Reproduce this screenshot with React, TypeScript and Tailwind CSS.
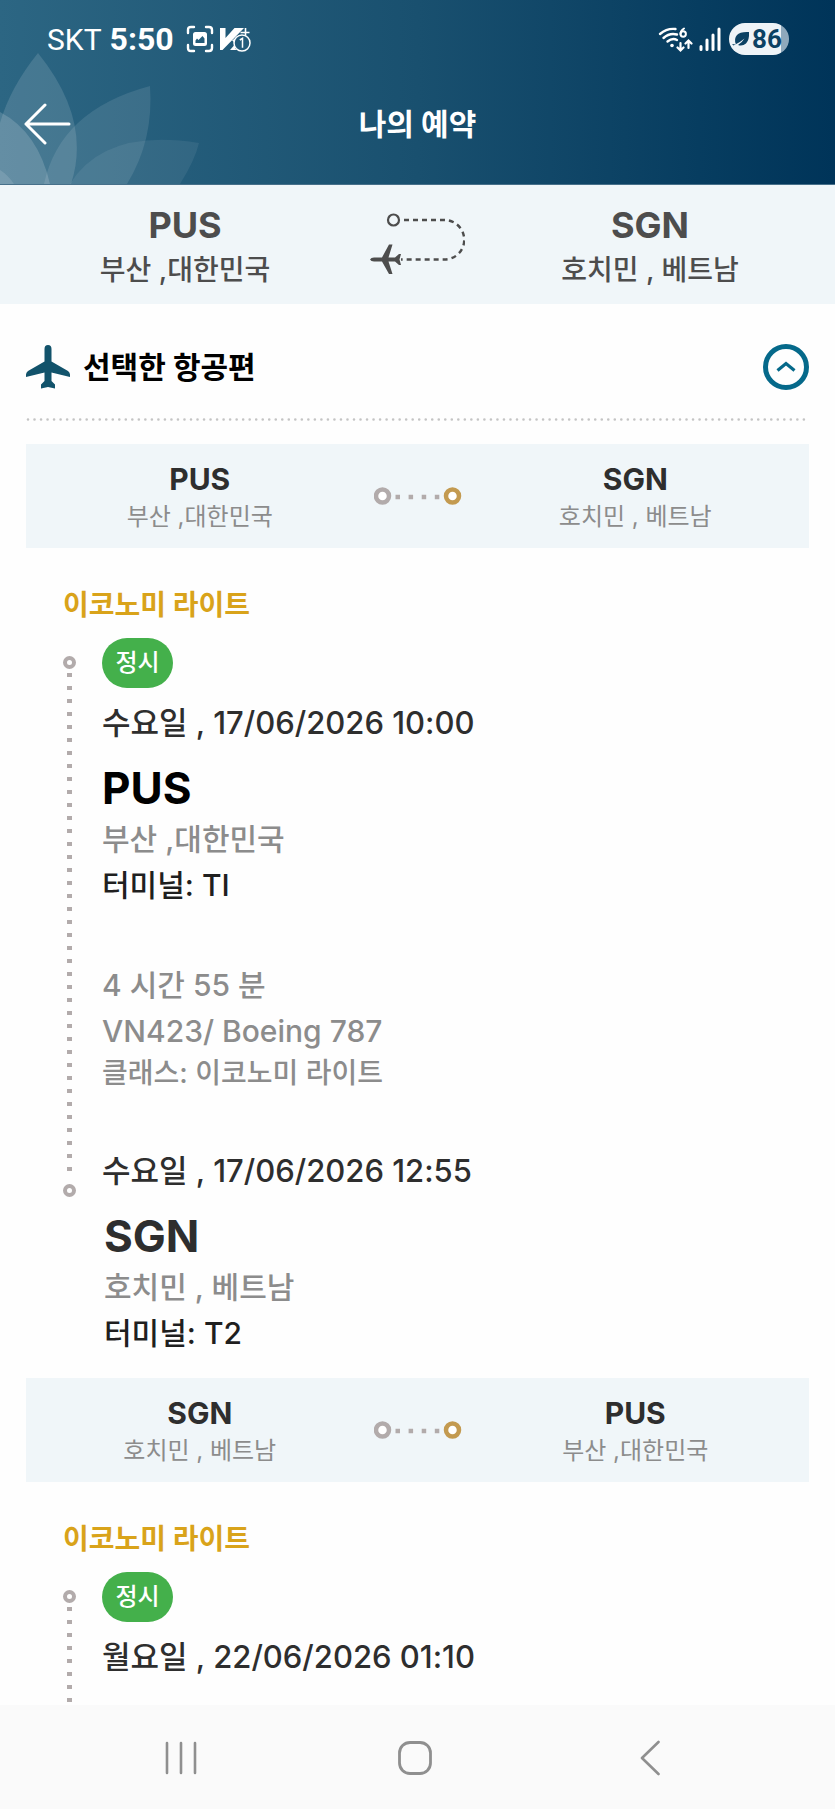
type Airport = { code: string; city: string }

type Leg = {
  from: Airport
  to: Airport
  cabin: string
  status: string
  departDate: string
}

const PUS: Airport = { code: 'PUS', city: '부산 ,대한민국' }
const SGN: Airport = { code: 'SGN', city: '호치민 , 베트남' }

const OUTBOUND: Leg = {
  from: PUS,
  to: SGN,
  cabin: '이코노미 라이트',
  status: '정시',
  departDate: '수요일 , 17/06/2026 10:00',
}

const INBOUND: Leg = {
  from: SGN,
  to: PUS,
  cabin: '이코노미 라이트',
  status: '정시',
  departDate: '월요일 , 22/06/2026 01:10',
}

function StatusBar() {
  return (
    <div className="flex items-center h-[46px] pl-[47px] pr-[46px] font-['Roboto',sans-serif] text-white">
      <span className="text-[30px]">SKT</span>
      <span className="ml-2 text-[32px] font-bold">5:50</span>

      {/* Notifications */}
      <svg className="ml-3 shrink-0" width="28" height="28" viewBox="0 0 28 28" fill="none" aria-hidden="true">
        <path
          d="M2 8V5q0-3 3-3h3M20 2h3q3 0 3 3v3M26 20v3q0 3-3 3h-3M8 26H5q-3 0-3-3v-3"
          stroke="currentColor"
          strokeWidth="2.4"
          strokeLinecap="round"
        />
        <path
          fillRule="evenodd"
          d="M9.500 7h9q2.500 0 2.500 2.500v9q0 2.500-2.500 2.500h-9q-2.500 0-2.500-2.500v-9q0-2.500 2.500-2.500ZM9.500 18h9v-4.500l-2-2.500-4 4-1.500-1.500-1.500 2Z"
          fill="currentColor"
        />
      </svg>
      <svg className="ml-[6px] shrink-0" width="31" height="28" viewBox="0 0 31 28" aria-hidden="true">
        <path d="M0 3h5.500v10L14.500 3H24L2.500 25H0Z" fill="currentColor" />
        <path d="M10 25l4-4.500v-3.500l-2-1.500 3-2v10l2 1.500Z" fill="currentColor" />
        <path d="M20.500 7.500h9M25.500 3v8" stroke="currentColor" strokeWidth="1.6" />
        <circle cx="22" cy="18" r="8" fill="#235b7a" stroke="currentColor" strokeWidth="1.5" />
        <path d="M19.800 15l2.700-1.700v9.500" stroke="currentColor" strokeWidth="1.5" fill="none" />
      </svg>

      {/* Connectivity */}
      <svg className="ml-auto shrink-0" width="35" height="28" viewBox="0 0 35 28" fill="none" aria-hidden="true">
        <g stroke="currentColor" strokeWidth="2.4" strokeLinecap="round">
          <path d="M2 9q7-6 15.500-5" />
          <path d="M5.500 13q6-5.500 13.500-3.500" />
          <path d="M9.500 16.500q5-4 9.500-1.500" />
          <path d="M22.500 18v7M19.500 22.500l3 3 3-3M30.500 23v-7M27.500 18.500l3-3 3 3" strokeWidth="2.2" />
          <path d="M26 3.500q-3.500 2-3.500 5.500" strokeWidth="2" />
          <circle cx="25.2" cy="9" r="2.7" strokeWidth="2" />
        </g>
        <circle cx="14" cy="20.5" r="1.8" fill="currentColor" />
      </svg>
      <svg className="ml-[6px] shrink-0" width="22" height="24" viewBox="0 0 22 24" aria-hidden="true">
        <path
          d="M2 19.500v3M8 13v9.500M14 8v14.500M20 2v20.500"
          stroke="currentColor"
          strokeWidth="3"
          strokeLinecap="round"
        />
      </svg>
      <span className="ml-2 flex items-center h-8 w-[60px] pl-[3px] rounded-full bg-linear-to-r from-[#eef3f7] from-[86%] to-[#8fa9bc] to-[86%] text-[#0b4163]">
        <svg className="shrink-0" width="18" height="16" viewBox="0 0 18 16" aria-hidden="true">
          <path
            d="M4 13.500Q1.500 8 5 4Q8 .5 17 1Q17.500 9 14 12.500Q10.500 15.500 6 14Q10 11.500 12.500 7.500Q8 11.500 1.500 14.500L0 13Z"
            fill="currentColor"
          />
        </svg>
        <span className="ml-[2px] text-[26px] font-bold leading-8">86</span>
      </span>
    </div>
  )
}

function Lotus() {
  return (
    <svg className="absolute left-0 bottom-0" width="200" height="134" viewBox="0 50 200 134" fill="#fff" aria-hidden="true">
      <path d="M38 53Q-4 105-6 160L0 184H71Q92 120 38 53Z" fillOpacity=".13" />
      <path d="M150 86Q60 110 44 184H127Q154 140 150 86Z" fillOpacity=".1" />
      <path d="M199 143Q105 128 70 184H180Q195 160 199 143Z" fillOpacity=".07" />
      <path d="M0 112Q38 132 50 184H0Z" fillOpacity=".16" />
      <path d="M0 170Q8 175 14 184H0Z" fillOpacity=".12" />
    </svg>
  )
}

function Header() {
  return (
    <header className="relative pt-4 border-b border-[#47708a] bg-linear-to-r from-[#2c6683] via-[#19506f] to-[#003459] text-white">
      <Lotus />
      <div className="relative">
        <StatusBar />
        <div className="grid grid-cols-[1fr_auto_1fr] items-center h-[122px] pt-[2px] px-6">
          <button type="button" aria-label="뒤로" className="justify-self-start">
            <svg width="48" height="42" viewBox="0 0 48 42" fill="none" stroke="currentColor" strokeWidth="3" strokeLinecap="round" strokeLinejoin="round">
              <path d="M21 2L2 21l19 19M2 21h43" />
            </svg>
          </button>
          <h1 className="text-[30px] font-bold leading-[46px]">나의 예약</h1>
        </div>
      </div>
    </header>
  )
}

function AirportLabel({ airport, codeClass, cityClass }: { airport: Airport; codeClass: string; cityClass: string }) {
  return (
    <div className="flex-1">
      <p className={codeClass}>{airport.code}</p>
      <p className={cityClass}>{airport.city}</p>
    </div>
  )
}

function TripSummary() {
  return (
    <section className="flex items-start h-[119px] pt-[18px] bg-[#f0f6f9] text-[#4d4d4d] text-center">
      <AirportLabel airport={PUS} codeClass="text-4xl leading-[44px] font-bold" cityClass="text-[28px] leading-[46px] font-medium" />
      <svg className="shrink-0 mt-[5px]" width="95" height="68" viewBox="0 0 95 68" fill="none" aria-hidden="true">
        <circle cx="23.5" cy="12" r="5.5" stroke="currentColor" strokeWidth="2.2" />
        <path d="M34 12H74.500A19.700 19.700 0 0 1 74.500 51.500H31" stroke="currentColor" strokeWidth="2.4" strokeDasharray="5 4" />
        <path
          d="M0 51.500Q1 49.500 4 49.500H12L19 36.500H22.500L18.500 49.500H25L29 46H31L29.500 51.500L31 57H29L25 53.500H18.500L22.500 66H19L12 53.500H4Q1 53.500 0 51.500Z"
          fill="currentColor"
        />
      </svg>
      <AirportLabel airport={SGN} codeClass="text-4xl leading-[44px] font-bold" cityClass="text-[28px] leading-[46px] font-medium" />
    </section>
  )
}

function RouteBar({ from, to }: { from: Airport; to: Airport }) {
  return (
    <div className="flex items-center h-[104px] bg-[#f0f6f9] text-center">
      <AirportLabel airport={from} codeClass="pt-[2px] text-[30px] leading-10 font-bold text-[#2e2e2e]" cityClass="text-2xl leading-9 text-[#8c8c8c]" />
      <svg className="shrink-0" width="88" height="18" viewBox="0 0 88 18" aria-hidden="true">
        <circle cx="8.5" cy="9" r="6.5" fill="#fff" stroke="#b2abab" strokeWidth="4.5" />
        <path d="M21.500 10h44" stroke="#b2abab" strokeWidth="4.5" strokeDasharray="4.5 8.6" />
        <circle cx="78.5" cy="9" r="6.5" fill="#fff" stroke="#c39a50" strokeWidth="4.5" />
      </svg>
      <AirportLabel airport={to} codeClass="pt-[2px] text-[30px] leading-10 font-bold text-[#2e2e2e]" cityClass="text-2xl leading-9 text-[#8c8c8c]" />
    </div>
  )
}

function RailDot() {
  return <span className="size-[13px] shrink-0 rounded-full border-[4px] border-[#b2abab] bg-white" />
}

function RailLine() {
  return (
    <span className="flex-1 w-[5px] mt-1 bg-[repeating-linear-gradient(to_bottom,#b2abab_0_4px,transparent_4px_13px)]" />
  )
}

function Departure({ leg }: { leg: Leg }) {
  return (
    <>
      <span className="flex items-center justify-center w-[71px] h-[50px] rounded-full bg-[#44b04b] text-white text-2xl font-medium">
        {leg.status}
      </span>
      <p className="mt-3 text-[31px] leading-[46px] font-medium text-[#2e2e2e]">{leg.departDate}</p>
    </>
  )
}

function StopDetails({ airport, terminal, codeColor }: { airport: Airport; terminal: string; codeColor: string }) {
  return (
    <div className="text-[30px] leading-[46px] font-medium">
      <p className={`text-[44px] leading-[56px] font-bold ${codeColor}`}>{airport.code}</p>
      <p className="text-[#8c8c8c]">{airport.city}</p>
      <p className="text-[#1f1f1f]">터미널: {terminal}</p>
    </div>
  )
}

function CabinName({ children }: { children: string }) {
  return <h3 className="mt-[34px] mb-[10px] ml-[37px] text-[28px] leading-[46px] font-bold text-[#d9a31a]">{children}</h3>
}

function SelectedFlights() {
  return (
    <section className="px-[26px]">
      {/* Section header */}
      <div className="flex items-center h-[114px] pt-3">
        <svg width="44" height="44" viewBox="0 0 44 44" fill="#12536b" aria-hidden="true">
          <path d="M22 0Q25.500 0 25.500 4V16.500L42 26Q44 27.500 44 29.500V32L25.500 27.500V36L29 39.500V43.500L22 42L15 43.500V39.500L18.500 36V27.500L0 32V29.500Q0 27.500 2 26L18.500 16.500V4Q18.500 0 22 0Z" />
        </svg>
        <h2 className="ml-[13px] text-[30px] leading-[46px] font-bold text-black">선택한 항공편</h2>
        <button type="button" aria-label="접기" aria-expanded="true" className="ml-auto">
          <svg width="46" height="46" viewBox="0 0 46 46" fill="none" stroke="#05698a">
            <circle cx="23" cy="23" r="20.5" strokeWidth="5" />
            <path d="M14.500 26.500L23 19.500l8.500 7" strokeWidth="3.2" />
          </svg>
        </button>
      </div>
      <svg className="block w-full h-[3px] mb-[23px]" aria-hidden="true">
        <line x1="2" y1="1.5" x2="100%" y2="1.5" stroke="#c4c4c4" strokeWidth="2.6" strokeLinecap="round" strokeDasharray="0 6.52" />
      </svg>

      {/* Outbound */}
      <RouteBar from={OUTBOUND.from} to={OUTBOUND.to} />
      <CabinName>{OUTBOUND.cabin}</CabinName>
      <div className="flex ml-[37px] gap-[26px]">
        <div className="flex flex-col items-center gap-y-0 pt-[18px] pb-[159px]">
          <RailDot />
          <RailLine />
          <span className="h-3 shrink-0" />
          <RailDot />
        </div>
        <div>
          <Departure leg={OUTBOUND} />
          <div className="mt-[14px]">
            <StopDetails airport={PUS} terminal="TI" codeColor="text-black" />
          </div>
          <div className="mt-[54px] mb-14 text-[30px] leading-[46px] font-medium text-[#8c8c8c]">
            <p>4 시간 55 분</p>
            <p>VN423/ Boeing 787</p>
            <p className="text-[28px] leading-[38px]">클래스: 이코노미 라이트</p>
          </div>
          <p className="text-[31px] leading-[46px] font-medium text-[#2e2e2e]">수요일 , 17/06/2026 12:55</p>
          <div className="mt-[14px] pl-[2px]">
            <StopDetails airport={SGN} terminal="T2" codeColor="text-[#2e2e2e]" />
          </div>
        </div>
      </div>

      {/* Inbound */}
      <div className="mt-[22px]">
        <RouteBar from={INBOUND.from} to={INBOUND.to} />
        <CabinName>{INBOUND.cabin}</CabinName>
        <div className="flex ml-[37px] gap-[26px]">
          <div className="flex flex-col items-center pt-[18px]">
            <RailDot />
            <RailLine />
          </div>
          <div className="pb-[25px]">
            <Departure leg={INBOUND} />
          </div>
        </div>
      </div>
    </section>
  )
}

function SystemNav() {
  return (
    <nav className="grid grid-cols-3 items-center justify-items-center h-[105px] pl-16 pr-[68px] bg-[#fafafa] text-[#8f8f8f]">
      <button type="button" aria-label="최근 앱">
        <svg width="32" height="34" viewBox="0 0 32 34" stroke="currentColor" strokeWidth="2.6" strokeLinecap="round">
          <path d="M2 2v30M16 2v30M30 2v30" />
        </svg>
      </button>
      <button type="button" aria-label="홈">
        <svg width="36" height="36" viewBox="0 0 36 36" fill="none" stroke="currentColor" strokeWidth="2.8">
          <rect x="2.5" y="2.5" width="31" height="31" rx="10.5" />
        </svg>
      </button>
      <button type="button" aria-label="뒤로 가기">
        <svg width="20" height="36" viewBox="0 0 20 36" fill="none" stroke="currentColor" strokeWidth="2.6" strokeLinecap="round" strokeLinejoin="round">
          <path d="M18.500 2L2 18l16.500 16" />
        </svg>
      </button>
    </nav>
  )
}

export default function App() {
  return (
    <div className="flex flex-col min-h-screen bg-[#fefefe] font-['Inter','Noto_Sans_CJK_KR',sans-serif]">
      <Header />
      <main className="flex-1">
        <TripSummary />
        <SelectedFlights />
      </main>
      <SystemNav />
    </div>
  )
}
